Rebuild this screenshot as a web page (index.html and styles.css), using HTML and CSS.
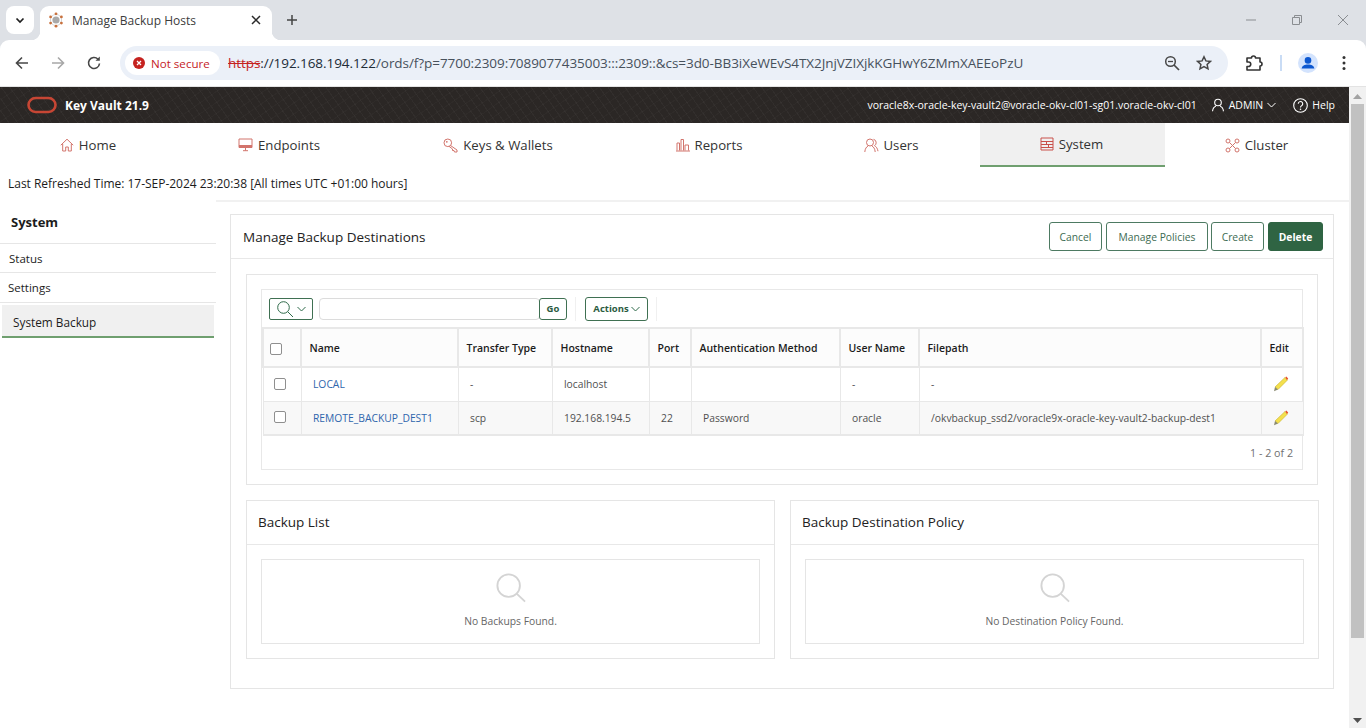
FILE: index.html
```html
<!DOCTYPE html>
<html lang="en">
<head>
    <meta charset="UTF-8">
    <meta name="viewport" content="width=device-width, initial-scale=1.0">
    <title>Manage Backup Hosts</title>
    <link rel="stylesheet" href="styles.css">
</head>
<body>
    <!-- browser chrome -->
    <div class="tabstrip">
        <div class="tab-search">
            <svg width="12" height="12" viewBox="0 0 12 12"><path d="M2.5 4.5 6 8l3.5-3.5" fill="none" stroke="#1f1f1f" stroke-width="1.7"/></svg>
        </div>
        <div class="tab">
            <svg class="favicon" width="16" height="16" viewBox="0 0 16 16">
                <circle cx="8" cy="8" r="3.6" fill="#a9a9a9"/>
                <circle cx="8" cy="8" r="5.6" fill="none" stroke="#c9c9c9" stroke-width=".8"/>
                <g fill="#c8703c"><circle cx="8" cy="1.8" r="1.4"/><circle cx="8" cy="14.2" r="1.4"/><circle cx="2.6" cy="4.9" r="1.4"/><circle cx="13.4" cy="4.9" r="1.4"/><circle cx="2.6" cy="11.1" r="1.4"/><circle cx="13.4" cy="11.1" r="1.4"/></g>
            </svg>
            <span class="tab-title">Manage Backup Hosts</span>
            <svg width="10" height="10" viewBox="0 0 10 10"><path d="M1 1l8 8M9 1 1 9" stroke="#2a2a2a" stroke-width="1.5"/></svg>
        </div>
        <svg class="new-tab" width="12" height="12" viewBox="0 0 12 12"><path d="M6 1v10M1 6h10" stroke="#444" stroke-width="1.5"/></svg>
        <div class="window-controls">
            <svg width="12" height="12" viewBox="0 0 12 12"><path d="M1 6h10" stroke="#8a8d91"/></svg>
            <svg width="12" height="12" viewBox="0 0 12 12"><path d="M3.5 3V1.500h7v7H9M1.500 3.500h7v7h-7z" fill="none" stroke="#8a8d91"/></svg>
            <svg width="12" height="12" viewBox="0 0 12 12"><path d="M1 1l10 10M11 1 1 11" stroke="#8a8d91"/></svg>
        </div>
    </div>
    <div class="toolbar">
        <svg class="tool-back" width="16" height="16" viewBox="0 0 16 16"><path d="M14 8H2.500M8 2.500 2.500 8 8 13.500" fill="none" stroke="#474747" stroke-width="1.600"/></svg>
        <svg class="tool-forward" width="16" height="16" viewBox="0 0 16 16"><path d="M2 8h11.500M8 2.500 13.500 8 8 13.500" fill="none" stroke="#a8a8a8" stroke-width="1.600"/></svg>
        <svg class="tool-reload" width="16" height="16" viewBox="0 0 16 16"><path d="M13.500 8.500A5.500 5.500 0 1 1 12 4.200" fill="none" stroke="#474747" stroke-width="1.600"/><path d="M13.800 1.500v4.300H9.500z" fill="#474747"/></svg>
        <div class="omnibox">
            <div class="not-secure">
                <svg width="12" height="12" viewBox="0 0 12 12"><circle cx="6" cy="6" r="6" fill="#c5221f"/><path d="M4 4l4 4M8 4 4 8" stroke="#fff" stroke-width="1.300"/></svg>
                <span>Not secure</span>
            </div>
            <div class="url"><span class="scheme">https</span><span class="host">://192.168.194.122</span>/ords/f?p=7700:2309:7089077435003:::2309::&amp;cs=3d0-BB3iXeWEvS4TX2JnjVZIXjkKGHwY6ZMmXAEEoPzU</div>
            <svg class="omni-zoom" width="16" height="16" viewBox="0 0 16 16"><circle cx="6.500" cy="6.500" r="4.800" fill="none" stroke="#474747" stroke-width="1.500"/><path d="M10 10l5 5" stroke="#474747" stroke-width="1.700"/><path d="M4 6.500h5" stroke="#474747" stroke-width="1.300"/></svg>
            <svg class="omni-star" width="16" height="16" viewBox="0 0 16 16"><path d="M8 1.800l1.900 4.100 4.500.5-3.300 3 .9 4.500L8 11.600l-4 2.300.9-4.500-3.300-3 4.500-.5z" fill="none" stroke="#474747" stroke-width="1.500"/></svg>
        </div>
        <svg class="tool-ext" width="18" height="18" viewBox="0 0 18 18"><path d="M2 4h4.500a2 2 0 0 1 4 0H15v4a2 2 0 0 1 0 4v4H2v-3.500h1.500a1.800 1.800 0 0 0 0-4.500H2z" fill="none" stroke="#333" stroke-width="1.600" stroke-linejoin="round"/></svg>
        <div class="tool-sep"></div>
        <div class="avatar">
            <svg width="20" height="20" viewBox="0 0 20 20"><circle cx="10" cy="7.400" r="3.300" fill="#0b57d0"/><path d="M3.600 15.600c.4-3 3-4.200 6.400-4.200s6 1.200 6.400 4.200z" fill="#0b57d0"/></svg>
        </div>
        <svg class="tool-menu" width="4" height="16" viewBox="0 0 4 16"><g fill="#333"><circle cx="2" cy="2.500" r="1.500"/><circle cx="2" cy="8" r="1.500"/><circle cx="2" cy="13.500" r="1.500"/></g></svg>
    </div>

    <div class="window">
        <div class="viewport">
            <header class="app-header">
                <div class="brand">
                    <svg width="30" height="18" viewBox="0 0 30 18"><rect x="1.500" y="2" width="27" height="14" rx="7" fill="none" stroke="#c74634" stroke-width="2.600"/></svg>
                    <span>Key Vault 21.9</span>
                </div>
                <div class="header-right">
                    <span>voracle8x-oracle-key-vault2@voracle-okv-cl01-sg01.voracle-okv-cl01</span>
                    <span class="header-user">
                        <svg width="14" height="14" viewBox="0 0 14 14"><circle cx="7" cy="4.500" r="3.300" fill="none" stroke="#fff" stroke-width="1.100"/><path d="M1.500 13.200c.4-3 2-4.600 3.400-5M12.500 13.200c-.4-3-2-4.600-3.400-5" fill="none" stroke="#fff" stroke-width="1.100"/></svg>
                        ADMIN
                        <svg width="9" height="6" viewBox="0 0 9 6"><path d="M.5 1l4 4 4-4" fill="none" stroke="#fff"/></svg>
                    </span>
                    <span class="header-help">
                        <svg width="15" height="15" viewBox="0 0 15 15"><circle cx="7.500" cy="7.500" r="6.800" fill="none" stroke="#fff" stroke-width="1.100"/><path d="M5.300 5.800a2.200 2.200 0 1 1 3.400 1.800c-.8.500-1.200.9-1.200 1.900" fill="none" stroke="#fff" stroke-width="1.100"/><circle cx="7.500" cy="11.300" r=".8" fill="#fff"/></svg>
                        Help
                    </span>
                </div>
            </header>

            <nav class="main-nav">
                <a class="nav-item">
                    <svg width="14" height="14" viewBox="0 0 14 14"><path d="M.8 7.200 7 1.200l6.200 6M2.700 6v7h3V9h2.600v4h3V6" fill="none" stroke="#d2746c"/></svg>
                    Home
                </a>
                <a class="nav-item">
                    <svg width="15" height="14" viewBox="0 0 15 14"><path d="M1 1h13v8.500H1z" fill="none" stroke="#d2746c"/><path d="M1 8h13" stroke="#d2746c" stroke-width="2"/><path d="M7.500 10v2.500M5 12.700h5" stroke="#d2746c"/></svg>
                    Endpoints
                </a>
                <a class="nav-item">
                    <svg width="15" height="15" viewBox="0 0 15 15"><circle cx="4.800" cy="4.800" r="3.800" fill="none" stroke="#d2746c"/><path d="M7.500 7.500 14 12v2h-2.500l-.5-1.500H9.500V11L6 8.300" fill="none" stroke="#d2746c"/><circle cx="3.800" cy="3.800" r=".9" fill="#d2746c"/></svg>
                    Keys &amp; Wallets
                </a>
                <a class="nav-item">
                    <svg width="14" height="14" viewBox="0 0 14 14"><path d="M1 12.500V5h2.500v7.500M5 12.500V1.500h2.500v11M9 12.500V7h3.500v5.500M0 13h14" fill="none" stroke="#d2746c"/></svg>
                    Reports
                </a>
                <a class="nav-item">
                    <svg width="15" height="15" viewBox="0 0 15 15"><circle cx="6" cy="4.500" r="3.500" fill="none" stroke="#d2746c"/><path d="M.8 14c.3-3.500 1.600-5 3.200-6M11.200 14c-.3-3.500-1.600-5-3.200-6M9.500 1.300a3.500 3.500 0 0 1 1 6.400c1.800 1 3 2.700 3.500 5.500" fill="none" stroke="#d2746c"/></svg>
                    Users
                </a>
                <a class="nav-item nav-active">
                    <svg width="14" height="14" viewBox="0 0 14 14"><path d="M1 1h12v12H1z" fill="none" stroke="#c9504a"/><path d="M1 4.500h12M1 7.500h12M1 10.500h12M6.500 5v2M8.500 8v2" stroke="#c9504a"/></svg>
                    System
                </a>
                <a class="nav-item">
                    <svg width="15" height="15" viewBox="0 0 15 15"><g fill="none" stroke="#d2746c"><circle cx="3" cy="3" r="2"/><circle cx="12" cy="3" r="2"/><circle cx="3" cy="12" r="2"/><circle cx="12" cy="12" r="2"/><path d="M4.500 4.500l6 6M10.500 4.500l-6 6"/></g></svg>
                    Cluster
                </a>
            </nav>

            <div class="refresh-row">Last Refreshed Time: 17-SEP-2024 23:20:38 [All times UTC +01:00 hours]</div>

            <div class="body-row">
                <aside class="side-nav">
                    <div class="side-title">System</div>
                    <div class="side-link side-status">Status</div>
                    <div class="side-link side-settings">Settings</div>
                    <div class="side-current">System Backup</div>
                </aside>

                <main class="content">
                    <section class="region">
                        <div class="region-head">
                            <h2>Manage Backup Destinations</h2>
                            <div class="button-row">
                                <button class="btn btn-cancel">Cancel</button>
                                <button class="btn btn-wide">Manage Policies</button>
                                <button class="btn btn-create">Create</button>
                                <button class="btn btn-primary">Delete</button>
                            </div>
                        </div>
                        <div class="region-body">
                            <div class="report-wrap">
                                <div class="report">
                                    <div class="report-bar">
                                        <div class="search-col">
                                            <svg width="18" height="18" viewBox="0 0 18 18"><circle cx="7.500" cy="7.500" r="5.800" fill="none" stroke="#2f6b4a"/><path d="M11.800 11.800 17 17" stroke="#2f6b4a"/></svg>
                                            <svg width="9" height="6" viewBox="0 0 9 6"><path d="M.5 1l4 4 4-4" fill="none" stroke="#2f6b4a"/></svg>
                                        </div>
                                        <input class="search-input" type="text">
                                        <button class="btn-small btn-go">Go</button>
                                        <div class="bar-sep"></div>
                                        <button class="btn-small btn-actions">Actions
                                            <svg width="9" height="6" viewBox="0 0 9 6"><path d="M.5 1l4 4 4-4" fill="none" stroke="#2f6b4a"/></svg>
                                        </button>
                                        <div class="bar-sep"></div>
                                    </div>
                                    <table class="hosts">
                                        <thead>
                                            <tr>
                                                <th class="col-check"><input type="checkbox"></th>
                                                <th>Name</th>
                                                <th>Transfer Type</th>
                                                <th>Hostname</th>
                                                <th>Port</th>
                                                <th>Authentication Method</th>
                                                <th>User Name</th>
                                                <th>Filepath</th>
                                                <th>Edit</th>
                                            </tr>
                                        </thead>
                                        <tbody>
                                            <tr>
                                                <td class="col-check"><input type="checkbox"></td>
                                                <td><a>LOCAL</a></td>
                                                <td>-</td>
                                                <td>localhost</td>
                                                <td></td>
                                                <td></td>
                                                <td>-</td>
                                                <td>-</td>
                                                <td class="col-edit">
                                                    <svg width="16" height="16" viewBox="0 0 16 16"><path d="M12 1.500 14.500 4 5 13.500 2 11z" fill="#f4e04d" stroke="#c8b02c" stroke-width=".6"/><path d="M12.300 1.200l1 -.6 1.900 1.900-.6 1-.9.300z" fill="#e8502a"/><path d="M2 11l3 2.500-4 1.800z" fill="#8a8a70"/></svg>
                                                </td>
                                            </tr>
                                            <tr class="row-alt">
                                                <td class="col-check"><input type="checkbox"></td>
                                                <td><a>REMOTE_BACKUP_DEST1</a></td>
                                                <td>scp</td>
                                                <td>192.168.194.5</td>
                                                <td>22</td>
                                                <td>Password</td>
                                                <td>oracle</td>
                                                <td>/okvbackup_ssd2/voracle9x-oracle-key-vault2-backup-dest1</td>
                                                <td class="col-edit">
                                                    <svg width="16" height="16" viewBox="0 0 16 16"><path d="M12 1.500 14.500 4 5 13.500 2 11z" fill="#f4e04d" stroke="#c8b02c" stroke-width=".6"/><path d="M12.300 1.200l1 -.6 1.900 1.900-.6 1-.9.300z" fill="#e8502a"/><path d="M2 11l3 2.500-4 1.800z" fill="#8a8a70"/></svg>
                                                </td>
                                            </tr>
                                        </tbody>
                                    </table>
                                    <div class="report-foot">1 - 2 of 2</div>
                                </div>
                            </div>
                            <div class="panels">
                                <div class="panel">
                                    <h3>Backup List</h3>
                                    <div class="panel-body">
                                        <div class="empty">
                                            <svg width="30" height="30" viewBox="0 0 32 32"><circle cx="13.500" cy="13.500" r="12" fill="none" stroke="#d4d4d4" stroke-width="2"/><path d="M22 22l9 8.500" stroke="#d4d4d4" stroke-width="2"/></svg>
                                            <span>No Backups Found.</span>
                                        </div>
                                    </div>
                                </div>
                                <div class="panel">
                                    <h3>Backup Destination Policy</h3>
                                    <div class="panel-body">
                                        <div class="empty">
                                            <svg width="30" height="30" viewBox="0 0 32 32"><circle cx="13.500" cy="13.500" r="12" fill="none" stroke="#d4d4d4" stroke-width="2"/><path d="M22 22l9 8.500" stroke="#d4d4d4" stroke-width="2"/></svg>
                                            <span>No Destination Policy Found.</span>
                                        </div>
                                    </div>
                                </div>
                            </div>
                        </div>
                    </section>
                </main>
            </div>
        </div>
        <div class="scrollbar">
            <svg width="9" height="5" viewBox="0 0 9 5"><path d="M4.500 0 9 5H0z" fill="#a3a3a3"/></svg>
            <div class="scroll-thumb"></div>
            <svg width="9" height="5" viewBox="0 0 9 5"><path d="M0 0h9L4.500 5z" fill="#505050"/></svg>
        </div>
    </div>
</body>
</html>
```

FILE: styles.css
```css
* { box-sizing: border-box; }
html, body { margin: 0; height: 728px; overflow: hidden; }
body { font-family: "Open Sans", "Noto Sans", Arial, sans-serif; font-size: 12px; color: #1c1c1c; background: #dee1e6; }

/* browser chrome */
.tabstrip { height: 40px; background: #dee1e6; display: flex; align-items: flex-start; }
.tab-search { width: 28px; height: 28px; margin: 6px 0 0 6px; background: #fff; border-radius: 8px; display: flex; align-items: center; justify-content: center; }
.tab { width: 232px; height: 34px; margin: 6px 0 0 6px; background: #fff; border-radius: 9px 9px 0 0; display: flex; align-items: center; padding: 0 11px 6px 8px; position: relative; }
.tab::before, .tab::after { content: ""; position: absolute; bottom: 0; width: 9px; height: 9px; }
.tab::before { left: -9px; background: radial-gradient(circle at 0 0, transparent 9px, #fff 9.5px); }
.tab::after { right: -9px; background: radial-gradient(circle at 100% 0, transparent 9px, #fff 9.5px); }
.favicon { margin-right: 8px; }
.tab-title { flex: 1; font-size: 12px; color: #3c3c3c; }
.new-tab { margin: 14px 0 0 14px; }
.window-controls { margin-left: auto; width: 121px; display: flex; justify-content: space-between; padding: 14px 17px 0 0; }
.toolbar { height: 47px; background: #fff; display: flex; align-items: center; border-bottom: 1px solid #e3e3e3; border-radius: 9px 9px 0 0; }
.tool-back { margin-left: 14px; }
.tool-forward { margin-left: 20px; }
.tool-reload { margin-left: 20px; }
.omnibox { margin-left: 18px; width: 1108px; height: 34px; background: #ebf0f8; border-radius: 17px; display: flex; align-items: center; padding: 0 16px 0 5px; }
.not-secure { height: 24px; width: 95px; background: #fff; border-radius: 12px; display: flex; align-items: center; gap: 6px; padding-left: 8px; color: #c5221f; font-size: 11.600px; flex-shrink: 0; }
.url { margin-left: 8px; flex: 1; font-size: 13.500px; color: #47515c; white-space: nowrap; letter-spacing: -.06px; }
.scheme { color: #c5221f; text-decoration: line-through; }
.host { color: #202b36; }
.omni-star { margin-left: 16px; }
.tool-ext { margin-left: 17px; }
.tool-sep { width: 2px; height: 16px; background: #c9dcf5; margin-left: 17px; }
.avatar { width: 20px; height: 20px; border-radius: 50%; background: #d3e3fd; margin-left: 16px; }
.tool-menu { margin-left: 24px; }

/* page */
.window { height: 641px; display: flex; background: #fff; }
.viewport { flex: 1; min-width: 0; }
.scrollbar { width: 17px; background: #f1f1f1; display: flex; flex-direction: column; align-items: center; justify-content: space-between; padding: 7px 0 5px; }
.scroll-thumb { width: 13px; height: 534px; background: #c1c1c1; position: absolute; top: 104px; }

.app-header { height: 36px; color: #fff; display: flex; justify-content: space-between; align-items: center; padding: 0 14px 0 27px; font-size: 10.500px;
    background-color: #2b2725;
    background-image: repeating-linear-gradient(55deg, rgba(255,255,255,.03) 0 1px, transparent 1px 7px), repeating-linear-gradient(-35deg, rgba(255,255,255,.02) 0 1px, transparent 1px 9px); }
.brand { display: flex; align-items: center; gap: 8px; font-weight: 700; font-size: 12px; }
.header-right { display: flex; align-items: center; }
.header-user { display: flex; align-items: center; gap: 4px; margin-left: 14px; }
.header-help { display: flex; align-items: center; gap: 4px; margin-left: 17px; }

.main-nav { height: 44px; display: grid; grid-template-columns: 178px 204px 234px 188px 176px 185px 185px; }
.nav-item { display: flex; align-items: center; justify-content: center; gap: 5px; font-size: 13.200px; color: #333; height: 44px; padding-right: 2px; }
.nav-active { background: #f0f0f0; border-bottom: 2px solid #6f9f6f; }

.refresh-row { height: 33px; padding: 8px 0 0 8px; font-size: 12px; letter-spacing: -.02px; }

.body-row { display: flex; }
.side-nav { width: 216px; padding-top: 13px; }
.side-title { height: 30px; padding: 0 0 0 11px; font-weight: 700; font-size: 13px; line-height: 18px; }
.side-link { height: 29px; font-size: 11.500px; line-height: 30px; border-top: 1px solid #e6e6e6; }
.side-status { padding-left: 9px; }
.side-settings { padding-left: 8px; height: 31px; border-bottom: 1px solid #e6e6e6; }
.side-current { height: 33px; margin: 2px 2px 0 2px; padding-left: 11px; line-height: 35px; font-size: 11.800px; background: #f0f0f0; border-bottom: 2px solid #6f9f6f; }

.content { flex: 1; min-width: 0; border-top: 2px solid #f1f1f1; padding: 12px 15px 0 14px; }
.region { height: 475px; border: 1px solid #e5e5e5; }
.region-head { height: 44px; border-bottom: 1px solid #e8e8e8; display: flex; justify-content: space-between; align-items: center; padding: 0 10px 0 12px; }
.region-head h2 { margin: 0; font-weight: 400; font-size: 13.500px; color: #222; }
.button-row { display: flex; gap: 4px; }
.btn { height: 29px; padding: 0; font: 400 10.300px "Open Sans", sans-serif; color: #3d6b52; background: #fff; border: 1px solid #4d7a62; border-radius: 3px; }
.btn-cancel { width: 53px; }
.btn-wide { width: 102px; }
.btn-create { width: 53px; margin-left: -1px; }
.btn-primary { background: #2f6443; color: #fff; font-weight: 700; border-color: #2f6443; width: 55px; }
.region-body { padding: 15px 15px 0; }

.report-wrap { height: 211px; border: 1px solid #e5e5e5; padding: 14px; }
.report { height: 181px; border: 1px solid #e8e8e8; }
.report-bar { height: 37px; display: flex; align-items: center; padding-left: 7px; }
.search-col { width: 44px; height: 22px; border: 1px solid #3f7052; border-radius: 2px; display: flex; align-items: center; gap: 3px; padding-left: 6px; }
.search-input { width: 221px; height: 22px; margin-left: 6px; border: 1px solid #dcdcdc; border-radius: 4px; background: #fff; }
.btn-small { height: 22px; font: 700 9.500px "Open Sans", sans-serif; color: #2c5b41; background: #fff; border: 1px solid #3f7052; border-radius: 3px; padding: 0; }
.btn-go { width: 28px; margin-left: -1px; }
.bar-sep { width: 1px; height: 24px; background: #f0f0f0; margin: 0 9px 0 8px; }
.btn-actions { width: 63px; height: 24px; display: flex; align-items: center; justify-content: center; gap: 2px; }
.hosts { width: 1040px; table-layout: fixed; border-collapse: collapse; font-size: 10.300px; }
.hosts th { height: 39px; text-align: left; padding: 0 7.500px; font-weight: 600; font-size: 10.500px; background: #fcfcfc; border: 2px solid #e8e8e8; white-space: nowrap; }
.hosts td { height: 34px; padding: 0 11.500px; color: #505050; border: 1px solid #e8e8e8; white-space: nowrap; }
.hosts a { color: #2f66ad; }
.hosts tbody tr:last-child td { border-bottom-width: 2px; }
.hosts th:nth-child(1) { width: 38px; padding: 0; }
.hosts th:nth-child(2) { width: 157px; }
.hosts th:nth-child(3) { width: 94px; }
.hosts th:nth-child(4) { width: 97px; }
.hosts th:nth-child(5) { width: 42px; }
.hosts th:nth-child(6) { width: 149px; }
.hosts th:nth-child(7) { width: 79px; }
.hosts th:nth-child(8) { width: 342px; }
.hosts th:nth-child(9) { width: 42px; }
.hosts .col-check { text-align: center; padding: 0; }
.hosts th.col-check input { margin-right: 12px; }
.hosts td.col-check input { margin: 0 4px 2px 0; }
.hosts .col-edit { text-align: center; padding: 0 2px 0 0; }
.col-edit svg { display: block; margin: 0 auto; }
.row-alt td { background: #f8f8f8; }
input[type="checkbox"] { appearance: none; width: 12px; height: 12px; margin: 0; border: 1px solid #8f8f8f; border-radius: 2px; background: #fff; vertical-align: middle; }
.report-foot { height: 34px; line-height: 34px; text-align: right; padding-right: 9px; font-size: 10.700px; color: #707070; }

.panels { display: grid; grid-template-columns: 529px 529px; gap: 15px; margin-top: 15px; }
.panel { height: 159px; border: 1px solid #e5e5e5; }
.panel h3 { margin: 0; height: 44px; line-height: 43px; padding-left: 11px; font-weight: 400; font-size: 13.500px; color: #222; border-bottom: 1px solid #e8e8e8; }
.panel-body { padding: 14px; }
.empty { height: 85px; border: 1px solid #e5e5e5; display: flex; flex-direction: column; align-items: center; padding-top: 13px; gap: 11px; font-size: 10.300px; color: #666; }
```
